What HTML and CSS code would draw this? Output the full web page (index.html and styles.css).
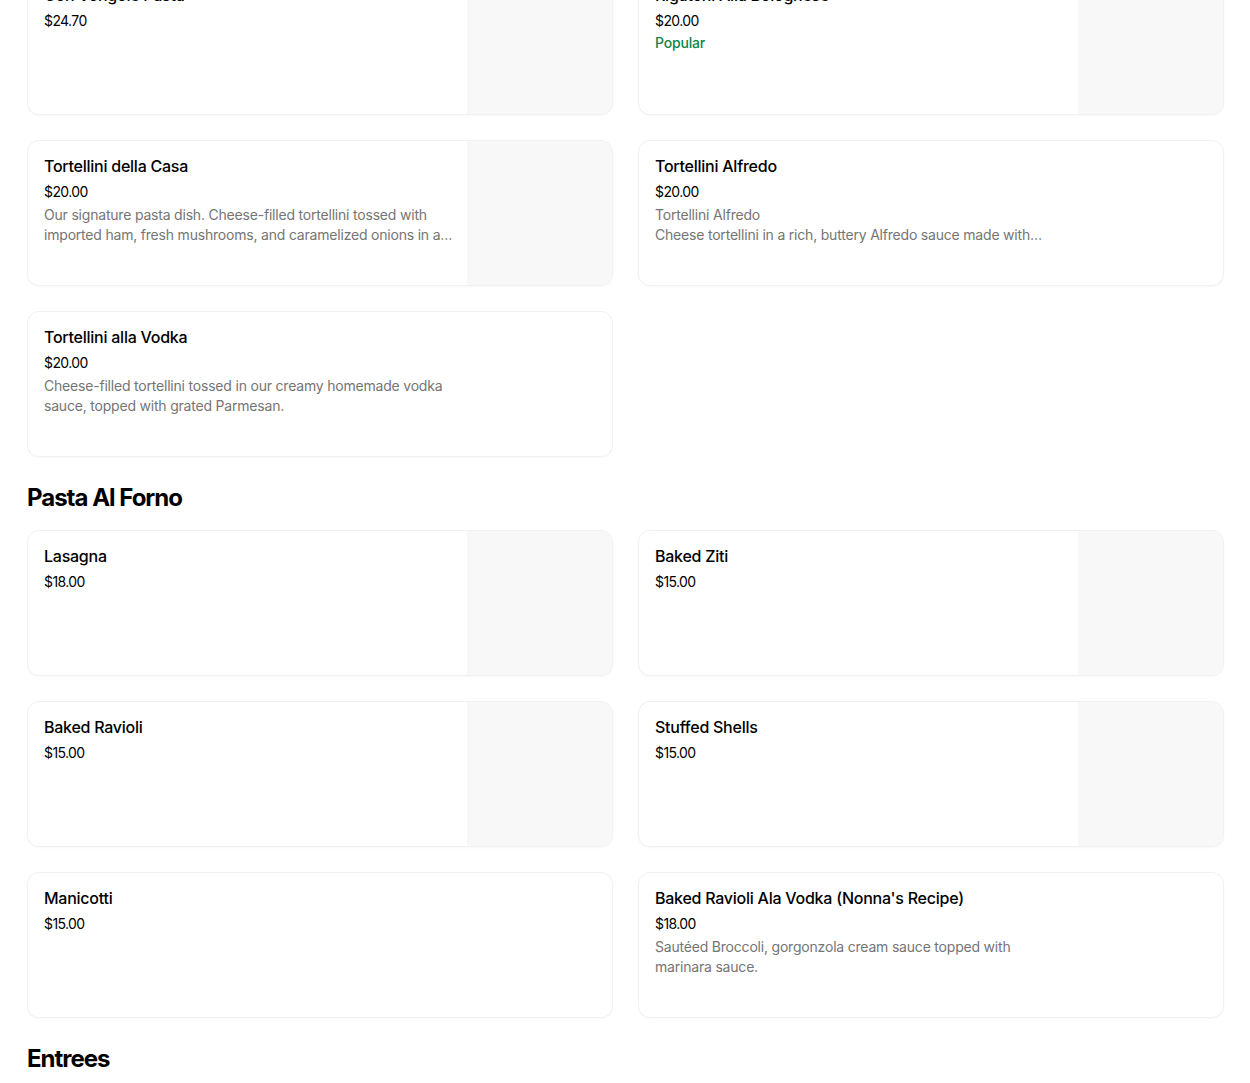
FILE: index.html
```html
<!DOCTYPE html>
<html lang="en">
<head>
<meta charset="utf-8">
<title>Menu</title>
<link rel="stylesheet" href="styles.css">
</head>
<body>
<main class="menu">
  <section class="section section-first">
    <div class="grid">
      <div class="card">
        <div class="info">
          <div class="title">Con Vongole Pasta</div>
          <div class="price">$24.70</div>
        </div>
        <div class="thumb"></div>
      </div>
      <div class="card">
        <div class="info">
          <div class="title">Rigatoni Alla Bolognese</div>
          <div class="price">$20.00</div>
          <div class="badge">Popular</div>
        </div>
        <div class="thumb"></div>
      </div>
      <div class="card">
        <div class="info">
          <div class="title">Tortellini della Casa</div>
          <div class="price">$20.00</div>
          <div class="desc">Our signature pasta dish. Cheese-filled tortellini tossed with imported ham, fresh mushrooms, and caramelized onions in a light cream sauce.</div>
        </div>
        <div class="thumb"></div>
      </div>
      <div class="card">
        <div class="info">
          <div class="title">Tortellini Alfredo</div>
          <div class="price">$20.00</div>
          <div class="desc desc-pre">Tortellini Alfredo
Cheese tortellini in a rich, buttery Alfredo sauce made with
fresh cream and Parmesan cheese.</div>
        </div>
        <div class="thumb thumb-empty"></div>
      </div>
      <div class="card">
        <div class="info">
          <div class="title">Tortellini alla Vodka</div>
          <div class="price">$20.00</div>
          <div class="desc">Cheese-filled tortellini tossed in our creamy homemade vodka sauce, topped with grated Parmesan.</div>
        </div>
        <div class="thumb thumb-empty"></div>
      </div>
    </div>
  </section>

  <section class="section">
    <h2 class="heading">Pasta Al Forno</h2>
    <div class="grid">
      <div class="card">
        <div class="info">
          <div class="title">Lasagna</div>
          <div class="price">$18.00</div>
        </div>
        <div class="thumb"></div>
      </div>
      <div class="card">
        <div class="info">
          <div class="title">Baked Ziti</div>
          <div class="price">$15.00</div>
        </div>
        <div class="thumb"></div>
      </div>
      <div class="card">
        <div class="info">
          <div class="title">Baked Ravioli</div>
          <div class="price">$15.00</div>
        </div>
        <div class="thumb"></div>
      </div>
      <div class="card">
        <div class="info">
          <div class="title">Stuffed Shells</div>
          <div class="price">$15.00</div>
        </div>
        <div class="thumb"></div>
      </div>
      <div class="card">
        <div class="info">
          <div class="title">Manicotti</div>
          <div class="price">$15.00</div>
        </div>
        <div class="thumb thumb-empty"></div>
      </div>
      <div class="card">
        <div class="info">
          <div class="title">Baked Ravioli Ala Vodka (Nonna's Recipe)</div>
          <div class="price">$18.00</div>
          <div class="desc">Sautéed Broccoli, gorgonzola cream sauce topped with marinara sauce.</div>
        </div>
        <div class="thumb thumb-empty"></div>
      </div>
    </div>
  </section>

  <section class="section">
    <h2 class="heading">Entrees</h2>
  </section>
</main>
</body>
</html>
```

FILE: styles.css
```css
* {
  box-sizing: border-box;
}

html, body {
  margin: 0;
  padding: 0;
  background: #ffffff;
}

body {
  font-family: "Inter", "Roboto", "Liberation Sans", sans-serif;
  color: #000000;
  -webkit-font-smoothing: antialiased;
}

.menu {
  padding: 0 26px 0 27px;
  margin-top: -31px;
}

.section {
  display: flex;
  flex-direction: column;
}

.heading {
  margin: 25px 0 16px 0;
  font-size: 24px;
  line-height: 32px;
  font-weight: 700;
  letter-spacing: -1px;
  color: #000000;
}

.grid {
  display: grid;
  grid-template-columns: 1fr 1fr;
  column-gap: 25px;
  row-gap: 25px;
}

.card {
  display: flex;
  height: 146px;
  border: 1px solid #f1f1f1;
  border-radius: 12px;
  overflow: hidden;
  background: #ffffff;
  box-shadow: 0 1px 2px rgba(0, 0, 0, 0.03);
}

.info {
  flex: 1;
  min-width: 0;
  padding: 13px 12px 16px 16px;
  display: flex;
  flex-direction: column;
}

.title {
  font-size: 16px;
  line-height: 24px;
  font-weight: 500;
  letter-spacing: -0.25px;
  color: #000000;
  white-space: nowrap;
  overflow: hidden;
  text-overflow: ellipsis;
}

.price {
  margin-top: 4px;
  font-size: 14px;
  line-height: 20px;
  font-weight: 400;
  letter-spacing: -0.6px;
  color: #000000;
}

.badge {
  margin-top: 2px;
  font-size: 14px;
  line-height: 20px;
  font-weight: 500;
  letter-spacing: -0.2px;
  color: #0e8345;
}

.desc {
  margin-top: 3px;
  font-size: 14px;
  line-height: 20px;
  font-weight: 400;
  letter-spacing: -0.2px;
  color: #757575;
  display: -webkit-box;
  -webkit-line-clamp: 2;
  -webkit-box-orient: vertical;
  overflow: hidden;
}

.desc-pre {
  white-space: pre-line;
}

.thumb {
  flex: 0 0 145px;
  background: #f8f8f8;
}

.thumb-empty {
  background: transparent;
}
```
